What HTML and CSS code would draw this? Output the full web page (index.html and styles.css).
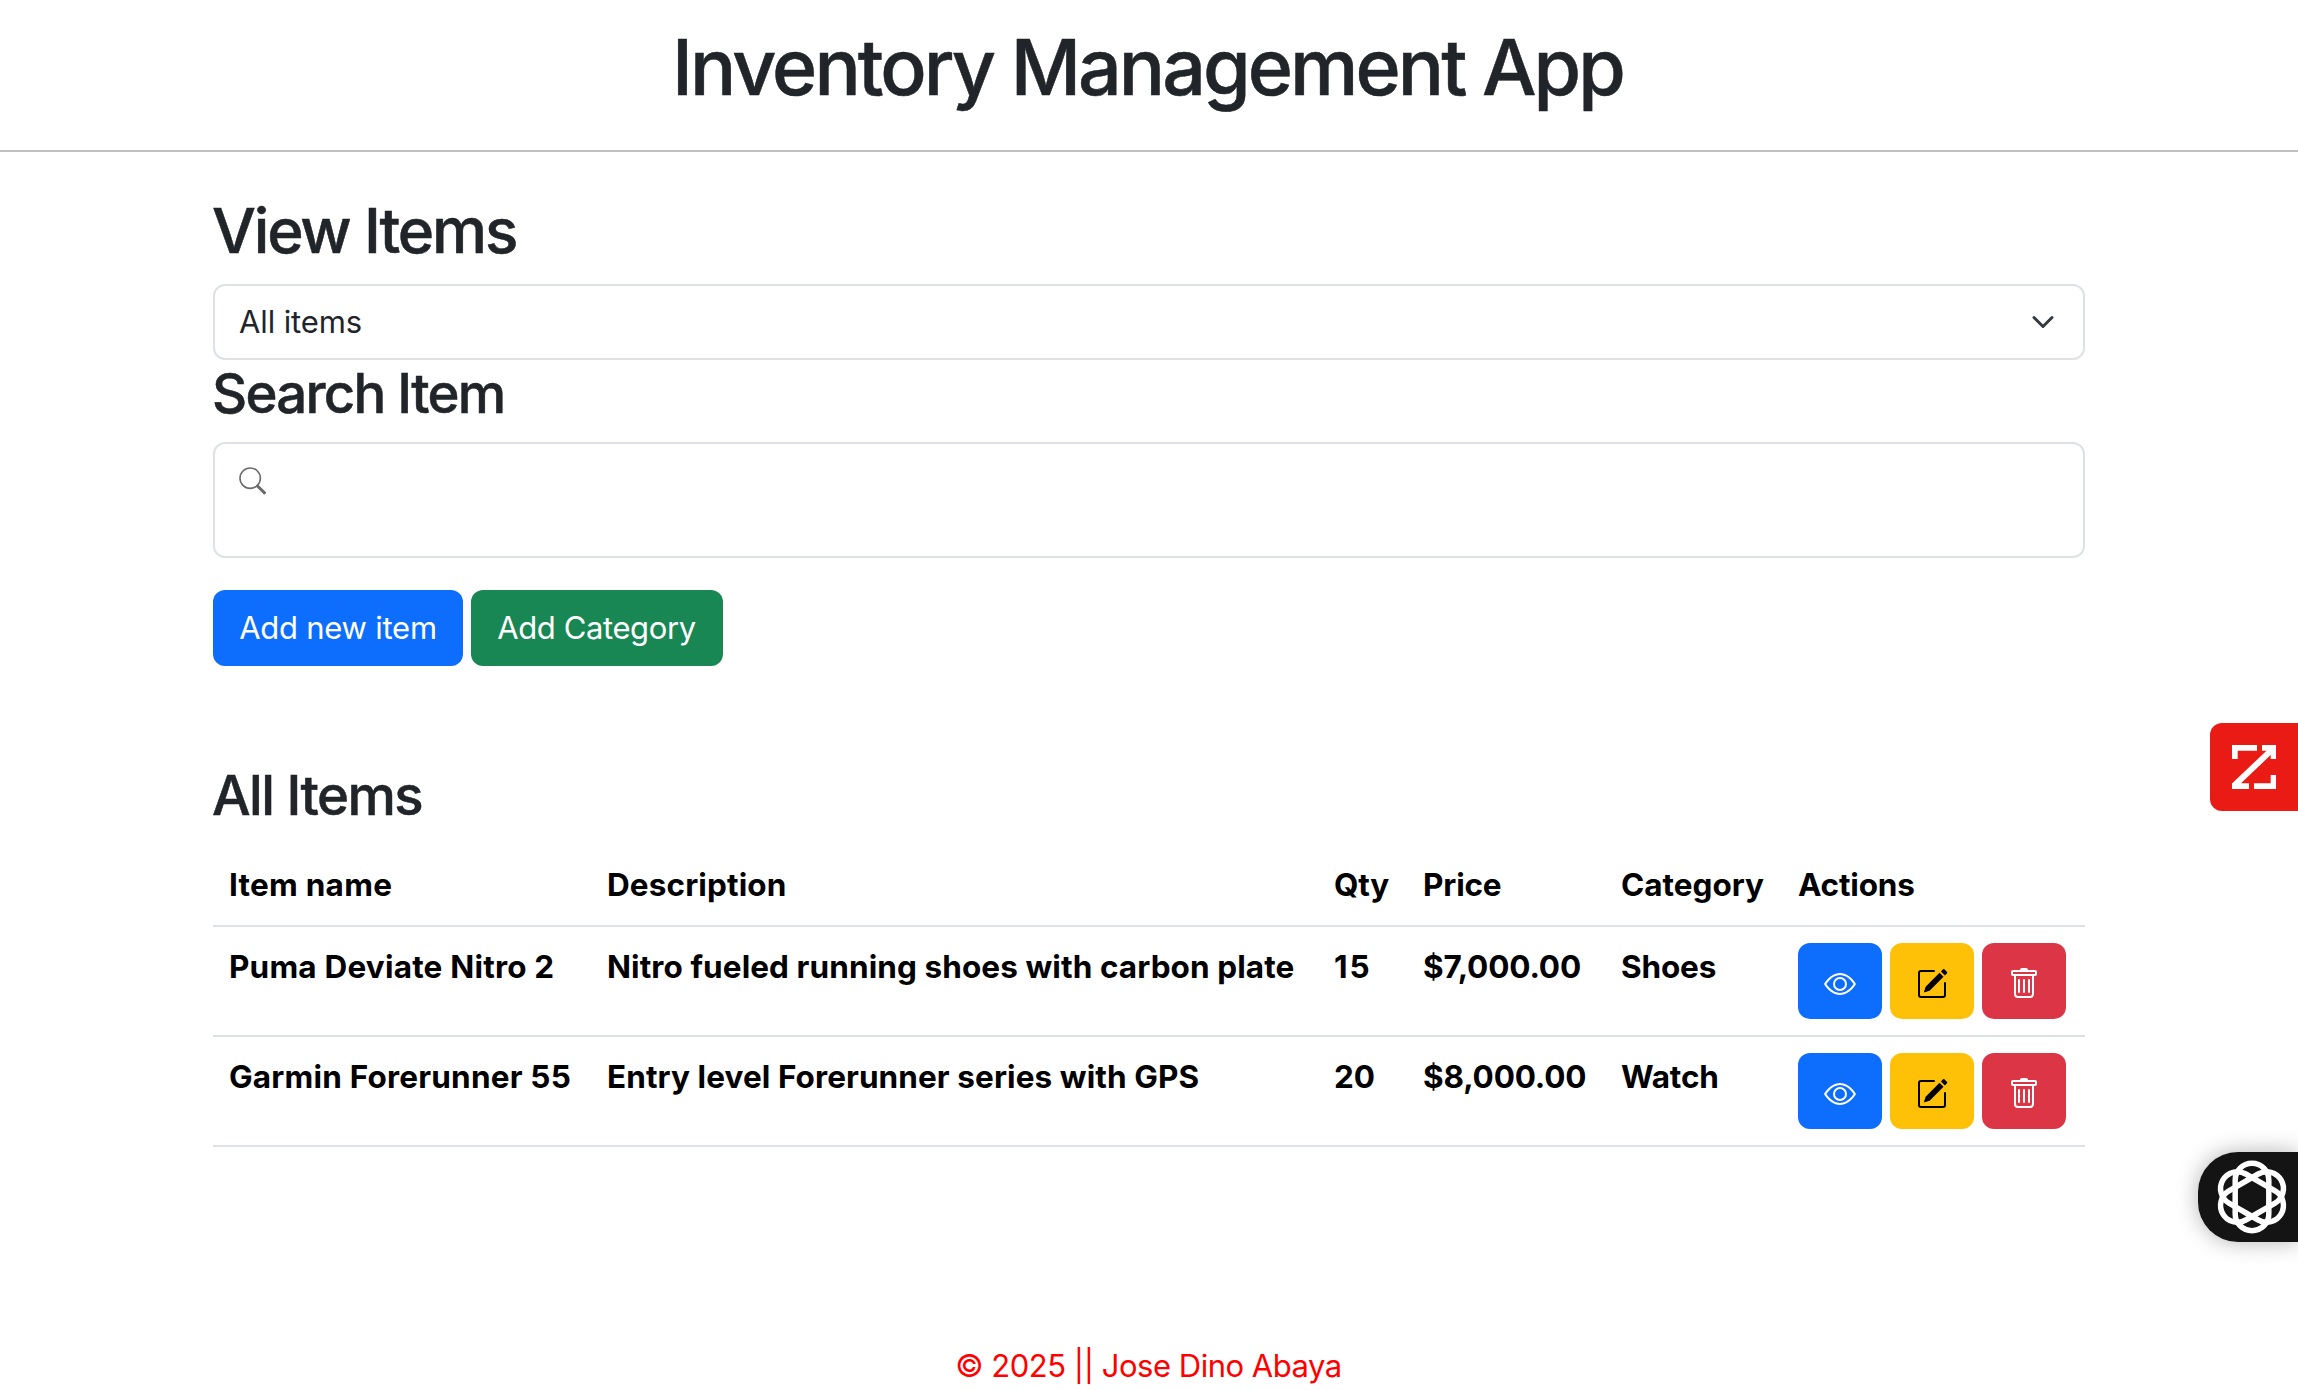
FILE: index.html
```
<!DOCTYPE html>
<html lang="en">
<head>
<meta charset="utf-8">
<title>Inventory Management App</title>
<link rel="stylesheet" href="styles.css">
</head>
<body>
<svg class="sprite" aria-hidden="true">
  <symbol id="eye" viewBox="0 0 16 16"><path d="M16 8s-3-5.500-8-5.500S0 8 0 8s3 5.500 8 5.500S16 8 16 8M1.173 8a13 13 0 0 1 1.660-2.043C4.120 4.668 5.880 3.500 8 3.500s3.879 1.168 5.168 2.457A13 13 0 0 1 14.828 8q-.086.130-.195.288c-.335.480-.830 1.120-1.465 1.755C11.879 11.332 10.119 12.500 8 12.500s-3.879-1.168-5.168-2.457A13 13 0 0 1 1.172 8z"/><path d="M8 5.500a2.500 2.500 0 1 0 0 5 2.500 2.500 0 0 0 0-5M4.500 8a3.500 3.500 0 1 1 7 0 3.500 3.500 0 0 1-7 0"/></symbol>
  <symbol id="pencil" viewBox="0 0 16 16"><path d="M15.502 1.940a.5.5 0 0 1 0 .706L14.459 3.690l-2-2L13.502.646a.5.5 0 0 1 .707 0l1.293 1.293zm-1.750 2.456-2-2L4.939 9.210a.5.5 0 0 0-.121.196l-.805 2.414a.25.25 0 0 0 .316.316l2.414-.805a.5.5 0 0 0 .196-.120l6.813-6.814z"/><path fill-rule="evenodd" d="M1 13.500A1.500 1.500 0 0 0 2.500 15h11a1.500 1.500 0 0 0 1.500-1.500v-6a.5.5 0 0 0-1 0v6a.5.5 0 0 1-.5.5h-11a.5.5 0 0 1-.5-.5v-11a.5.5 0 0 1 .5-.5H9a.5.5 0 0 0 0-1H2.500A1.500 1.500 0 0 0 1 2.500z"/></symbol>
  <symbol id="trash" viewBox="0 0 16 16"><path d="M5.500 5.500A.5.5 0 0 1 6 6v6a.5.5 0 0 1-1 0V6a.5.5 0 0 1 .5-.5m2.500 0a.5.5 0 0 1 .5.5v6a.5.5 0 0 1-1 0V6a.5.5 0 0 1 .5-.5m3 .5a.5.5 0 0 0-1 0v6a.5.5 0 0 0 1 0z"/><path d="M14.500 3a1 1 0 0 1-1 1H13v9a2 2 0 0 1-2 2H5a2 2 0 0 1-2-2V4h-.5a1 1 0 0 1-1-1V2a1 1 0 0 1 1-1H6a1 1 0 0 1 1-1h2a1 1 0 0 1 1 1h3.500a1 1 0 0 1 1 1zM4.118 4 4 4.059V13a1 1 0 0 0 1 1h6a1 1 0 0 0 1-1V4.059L11.882 4zM2.500 3h11V2h-11z"/></symbol>
</svg>
<header class="site-header"><h1>Inventory Management App</h1></header>
<main class="container">
  <h2>View Items</h2>
  <div class="select"><span>All items</span>
    <svg class="chevron" viewBox="0 0 16 16"><path d="m2 5 6 6 6-6" fill="none" stroke="#343a40" stroke-width="2" stroke-linecap="round" stroke-linejoin="round"/></svg>
  </div>
  <h3 class="search-title">Search Item</h3>
  <div class="search">
    <svg class="search-icon" viewBox="0 0 28 28"><circle cx="11.200" cy="11.200" r="10.200"/><path class="handle" d="M18.500 19 25.500 25.800"/></svg>
  </div>
  <div class="buttons">
    <button class="btn primary add-item">Add new item</button>
    <button class="btn success add-category">Add Category</button>
  </div>
  <h3 class="items-title">All Items</h3>
  <table class="items">
    <colgroup><col class="c-name"><col class="c-desc"><col class="c-qty"><col class="c-price"><col class="c-cat"><col class="c-act"></colgroup>
    <thead>
      <tr><th class="name head">Item name</th><th class="desc head">Description</th><th>Qty</th><th>Price</th><th class="cat">Category</th><th class="act">Actions</th></tr>
    </thead>
    <tbody>
      <tr><th class="name">Puma Deviate Nitro 2</th><th class="desc">Nitro fueled running shoes with carbon plate</th><th class="spread">15</th><th>$7,000.00</th><th>Shoes</th>
        <th class="act"><div class="actions"><button class="btn primary icon"><svg><use href="#eye"/></svg></button><button class="btn warning icon"><svg><use href="#pencil"/></svg></button><button class="btn danger icon"><svg><use href="#trash"/></svg></button></div></th></tr>
      <tr><th class="name">Garmin Forerunner 55</th><th class="desc">Entry level Forerunner series with GPS</th><th>20</th><th>$8,000.00</th><th>Watch</th>
        <th class="act"><div class="actions"><button class="btn primary icon"><svg><use href="#eye"/></svg></button><button class="btn warning icon"><svg><use href="#pencil"/></svg></button><button class="btn danger icon"><svg><use href="#trash"/></svg></button></div></th></tr>
    </tbody>
  </table>
</main>
<footer class="site-footer">© 2025 || Jose Dino Abaya</footer>

<div class="tab-red">
  <svg viewBox="0 0 88 88"><path d="M22 22h25v5.700H27.700V36H22zM52 22h14v14h-5.300v-4L31 60.300h8V66H22v-5.500L56.500 27.700H52zM66 52v14H44v-5.700h16.700V52z"/></svg>
</div>
<div class="tab-dark">
  <svg viewBox="-38 -38 76 76"><g fill="none" stroke="#fff" stroke-width="5.500"><rect id="loop" x="-16.800" y="-33.700" width="33.600" height="67.400" rx="16.800"/><use href="#loop" transform="rotate(60)"/><use href="#loop" transform="rotate(120)"/></g></svg>
</div>
</body>
</html>
```

FILE: styles.css
```
* { box-sizing: border-box; }
body {
  margin: 0;
  height: 1390px;
  overflow: hidden;
  background: #fff;
  color: #212529;
  font: 400 31px/48px Inter, sans-serif;
}
.sprite { display: none; }
h1, h2, h3 { margin: 0; font-weight: 500; -webkit-text-stroke: .5px currentColor; white-space: nowrap; }

.site-header {
  height: 152px;
  padding-top: 19px;
  border-bottom: 2px solid #c0c0c0;
  text-align: center;
}
h1 { font-size: 77px; line-height: 96px; letter-spacing: -2.95px; padding-right: 3px; }

.container { width: 1872px; margin: 0 auto; padding-top: 41px; }
h2, h3 { margin-left: -1px; }
h2 { font-size: 62px; line-height: 76px; letter-spacing: -2.2px; margin-bottom: 15px; }
h3 { font-size: 54.5px; line-height: 67px; }
.search-title { letter-spacing: -1.75px; margin-bottom: 15px; }
.items-title { letter-spacing: -1.55px; margin-top: 96px; margin-bottom: 16px; }

.select, .search { border: 2px solid #dee2e6; border-radius: 12px; background: #fff; }
.select {
  display: flex;
  align-items: center;
  justify-content: space-between;
  height: 76px;
  padding: 0 28px 0 24px;
  letter-spacing: -.12px;
}
.chevron { width: 24px; height: 24px; }
.search { display: flex; height: 116px; padding: 23px 24px; }
.search-icon { width: 28px; height: 28px; }
.search-icon circle { fill: none; stroke: #6b6b6b; stroke-width: 1.6; }
.search-icon .handle { stroke: #6b6b6b; stroke-width: 3; stroke-linecap: round; }

.buttons { display: flex; gap: 8px; margin-top: 32px; }
.btn {
  height: 76px;
  padding: 0;
  border: 0;
  border-radius: 12px;
  color: #fff;
  font: inherit;
  white-space: nowrap;
}
.primary { background: #0d6efd; }
.success { background: #198754; }
.warning { background: #ffc107; color: #000; }
.danger { background: #dc3545; }
.add-item { width: 250px; letter-spacing: -.25px; }
.add-category { width: 252px; padding-right: 1px; letter-spacing: -.4px; }

.items { width: 100%; table-layout: fixed; border-spacing: 0; color: #000; }
.c-name { width: 378px; }
.c-desc { width: 728px; }
.c-qty { width: 89px; }
.c-price { width: 198px; }
.c-cat { width: 176px; }
.c-act { width: 303px; }
.items th {
  padding: 16px 0 16px 15px;
  border-bottom: 2px solid #dee2e6;
  font-size: 31.5px;
  font-weight: 700;
  line-height: 48px;
  text-align: left;
  vertical-align: top;
  letter-spacing: -.17px;
  white-space: nowrap;
}
.items .name { padding-left: 16px; letter-spacing: .2px; }
.items .desc { padding-left: 16px; letter-spacing: .09px; }
.items .name.head { letter-spacing: .25px; }
.items .desc.head { letter-spacing: .12px; }
.items .cat { letter-spacing: 0; }
.items .spread { letter-spacing: 2px; }
.items .act { padding-left: 16px; }
.actions { display: flex; gap: 8px; }
.icon { display: flex; justify-content: center; width: 84px; padding-top: 25px; }
.icon svg { width: 32px; height: 32px; fill: currentColor; }

.site-footer { margin-top: 195px; padding-right: 1px; color: #f00; text-align: center; letter-spacing: -.48px; }

.tab-red {
  position: absolute;
  top: 723px;
  right: 0;
  width: 88px;
  height: 88px;
  border-radius: 12px 0 0 12px;
  background: #ea1b15;
}
.tab-red svg { display: block; width: 88px; height: 88px; fill: #fff; }
.tab-dark {
  position: absolute;
  top: 1152px;
  right: 0;
  width: 100px;
  height: 90px;
  padding: 7px 0 0 16px;
  border-radius: 40px 0 0 40px;
  background: #141414;
  box-shadow: 0 0 22px rgba(0, 0, 0, .3);
}
.tab-dark svg { display: block; width: 76px; height: 76px; }
```
